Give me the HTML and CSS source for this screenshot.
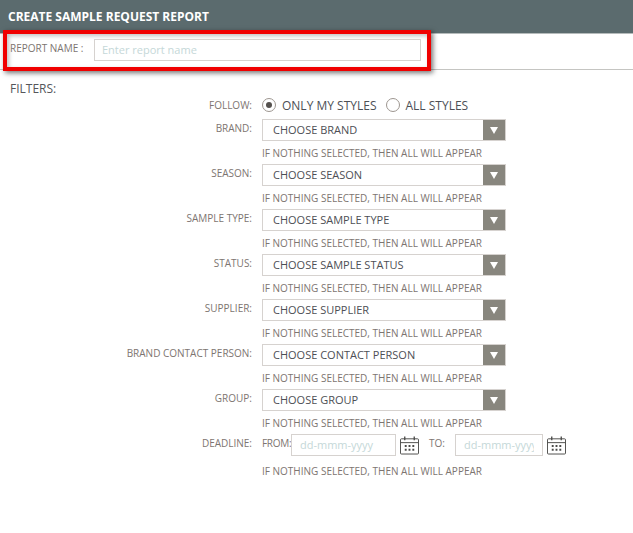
FILE: index.html
```html
<!DOCTYPE html>
<html lang="en">
<head>
    <meta charset="UTF-8">
    <title>Create Sample Request Report</title>
    <link rel="stylesheet" href="styles.css">
</head>
<body>

<svg class="icon-defs" width="0" height="0">
    <symbol id="calendar" viewBox="0 0 20 20">
        <path d="M1.5 3.5h17a1 1 0 0 1 1 1v14a1 1 0 0 1-1 1h-17a1 1 0 0 1-1-1v-14a1 1 0 0 1 1-1zM.5 7.5h19" fill="none" stroke="#4a4a48"/>
        <path d="M5 1v4M15 1v4" fill="none" stroke="#4a4a48" stroke-width="1.4"/>
        <path d="M5 10h2v2H5zM9 10h2v2H9zM13 10h2v2h-2zM5 14h2v2H5zM9 14h2v2H9zM13 14h2v2h-2z" fill="#4a4a48"/>
    </symbol>
</svg>

<div class="header">CREATE SAMPLE REQUEST REPORT</div>

<div class="report-name">
    <div class="highlight">
        <label>REPORT NAME :</label>
        <input type="text" class="name-input" placeholder="Enter report name">
    </div>
</div>

<div class="filters">
    <div class="filters-title">FILTERS:</div>

    <div class="form-row follow-row">
        <div class="row-label">FOLLOW:</div>
        <div class="row-field radios">
            <span class="radio checked"></span><span class="radio-text">ONLY MY STYLES</span>
            <span class="radio"></span><span class="radio-text">ALL STYLES</span>
        </div>
    </div>

    <div class="form-row">
        <div class="row-label">BRAND:</div>
        <div class="row-field">
            <div class="select"><span class="select-text">CHOOSE BRAND</span><span class="select-arrow"></span></div>
            <div class="hint">IF NOTHING SELECTED, THEN ALL WILL APPEAR</div>
        </div>
    </div>

    <div class="form-row">
        <div class="row-label">SEASON:</div>
        <div class="row-field">
            <div class="select"><span class="select-text">CHOOSE SEASON</span><span class="select-arrow"></span></div>
            <div class="hint">IF NOTHING SELECTED, THEN ALL WILL APPEAR</div>
        </div>
    </div>

    <div class="form-row">
        <div class="row-label">SAMPLE TYPE:</div>
        <div class="row-field">
            <div class="select"><span class="select-text">CHOOSE SAMPLE TYPE</span><span class="select-arrow"></span></div>
            <div class="hint">IF NOTHING SELECTED, THEN ALL WILL APPEAR</div>
        </div>
    </div>

    <div class="form-row">
        <div class="row-label">STATUS:</div>
        <div class="row-field">
            <div class="select"><span class="select-text">CHOOSE SAMPLE STATUS</span><span class="select-arrow"></span></div>
            <div class="hint">IF NOTHING SELECTED, THEN ALL WILL APPEAR</div>
        </div>
    </div>

    <div class="form-row">
        <div class="row-label">SUPPLIER:</div>
        <div class="row-field">
            <div class="select"><span class="select-text">CHOOSE SUPPLIER</span><span class="select-arrow"></span></div>
            <div class="hint">IF NOTHING SELECTED, THEN ALL WILL APPEAR</div>
        </div>
    </div>

    <div class="form-row">
        <div class="row-label">BRAND CONTACT PERSON:</div>
        <div class="row-field">
            <div class="select"><span class="select-text">CHOOSE CONTACT PERSON</span><span class="select-arrow"></span></div>
            <div class="hint">IF NOTHING SELECTED, THEN ALL WILL APPEAR</div>
        </div>
    </div>

    <div class="form-row">
        <div class="row-label">GROUP:</div>
        <div class="row-field">
            <div class="select"><span class="select-text">CHOOSE GROUP</span><span class="select-arrow"></span></div>
            <div class="hint">IF NOTHING SELECTED, THEN ALL WILL APPEAR</div>
        </div>
    </div>

    <div class="form-row">
        <div class="row-label">DEADLINE:</div>
        <div class="row-field">
            <div class="dates">
                <span class="date-label">FROM:</span>
                <input type="text" class="date-input" placeholder="dd-mmm-yyyy">
                <svg class="calendar"><use href="#calendar"></use></svg>
                <span class="date-label to-label">TO:</span>
                <input type="text" class="date-input to-input" placeholder="dd-mmm-yyyy">
                <svg class="calendar"><use href="#calendar"></use></svg>
            </div>
            <div class="hint date-hint">IF NOTHING SELECTED, THEN ALL WILL APPEAR</div>
        </div>
    </div>
</div>

</body>
</html>
```

FILE: styles.css
```css
* {
    box-sizing: border-box;
}
body {
    margin: 0;
    font-family: "Open Sans", Arial, sans-serif;
    background-color: white;
    color: #7d7571;
}
.icon-defs {
    display: block;
    height: 0;
}
.header {
    height: 34px;
    padding-left: 8px;
    background-color: #5b6b6e;
    border-bottom: 1px solid #b5bbbb;
    color: white;
    font-size: 12px;
    font-weight: 700;
    line-height: 33px;
}
.report-name {
    display: flow-root;
    height: 36px;
    border-bottom: 1px solid #c5c5c2;
}
.highlight {
    display: flex;
    align-items: flex-start;
    width: 428px;
    height: 41px;
    margin-left: 3px;
    margin-top: -4px;
    padding: 5px 0 0 3px;
    border: 4px solid #f00000;
    box-shadow: 2px 2px 5px rgba(0, 0, 0, 0.55), inset 2px 2px 4px rgba(0, 0, 0, 0.25);
    background-color: white;
}
.highlight label {
    width: 84px;
    margin-top: 3px;
    font-size: 10px;
    line-height: 12px;
    flex-shrink: 0;
}
.name-input {
    width: 327px;
    height: 22px;
    padding: 0 7px 2px;
    border: 1px solid #d6d2cf;
    font-family: inherit;
    font-size: 11px;
}
input::placeholder {
    color: #c5d8d8;
    opacity: 1;
}
.filters {
    padding-top: 11px;
}
.filters-title {
    height: 16px;
    margin-left: 10px;
    color: #55565a;
    font-size: 12px;
    line-height: 16px;
}
.form-row {
    display: flex;
    height: 45px;
}
.follow-row {
    height: 23px;
    margin-top: -1px;
}
.row-label {
    width: 252px;
    padding-top: 1px;
    text-align: right;
    font-size: 10px;
    line-height: 16px;
    flex-shrink: 0;
}
.row-field {
    margin-left: 10px;
}
.radios {
    display: flex;
    align-items: center;
    height: 18px;
    color: #4d4f55;
    font-size: 12px;
}
.radio {
    width: 14px;
    height: 14px;
    margin-right: 6px;
    border: 1px solid #9d9690;
    border-radius: 50%;
    display: flex;
    align-items: center;
    justify-content: center;
}
.radio.checked::after {
    content: "";
    width: 6px;
    height: 6px;
    border-radius: 50%;
    background-color: #55514e;
}
.radio-text {
    margin-right: 9px;
}
.select {
    display: flex;
    width: 244px;
    height: 22px;
    border: 1px solid #d6d2cf;
    align-items: center;
}
.select-text {
    flex: 1;
    padding: 0 0 2px 10px;
    color: #4d4f55;
    font-size: 11px;
}
.select-arrow {
    width: 22px;
    height: 20px;
    background-color: #88867e;
    display: flex;
    align-items: center;
    justify-content: center;
}
.select-arrow::after {
    content: "";
    border-left: 4px solid transparent;
    border-right: 4px solid transparent;
    border-top: 7px solid white;
}
.hint {
    margin-top: 6px;
    font-size: 10px;
    line-height: 12px;
    white-space: nowrap;
}
.dates {
    display: flex;
    align-items: flex-start;
    height: 22px;
}
.date-label {
    width: 29px;
    margin-top: 1px;
    font-size: 10px;
    line-height: 16px;
    letter-spacing: -0.3px;
    white-space: nowrap;
}
.to-label {
    width: 26px;
    margin-left: 10px;
    letter-spacing: 0;
}
.date-input {
    width: 105px;
    height: 22px;
    padding: 0 8px 2px;
    border: 1px solid #d6d2cf;
    font-family: inherit;
    font-size: 11px;
}
.to-input {
    width: 88px;
}
.calendar {
    width: 19px;
    height: 20px;
    margin-left: 4px;
    margin-top: 1px;
}
.date-hint {
    margin-top: 9px;
}
```
